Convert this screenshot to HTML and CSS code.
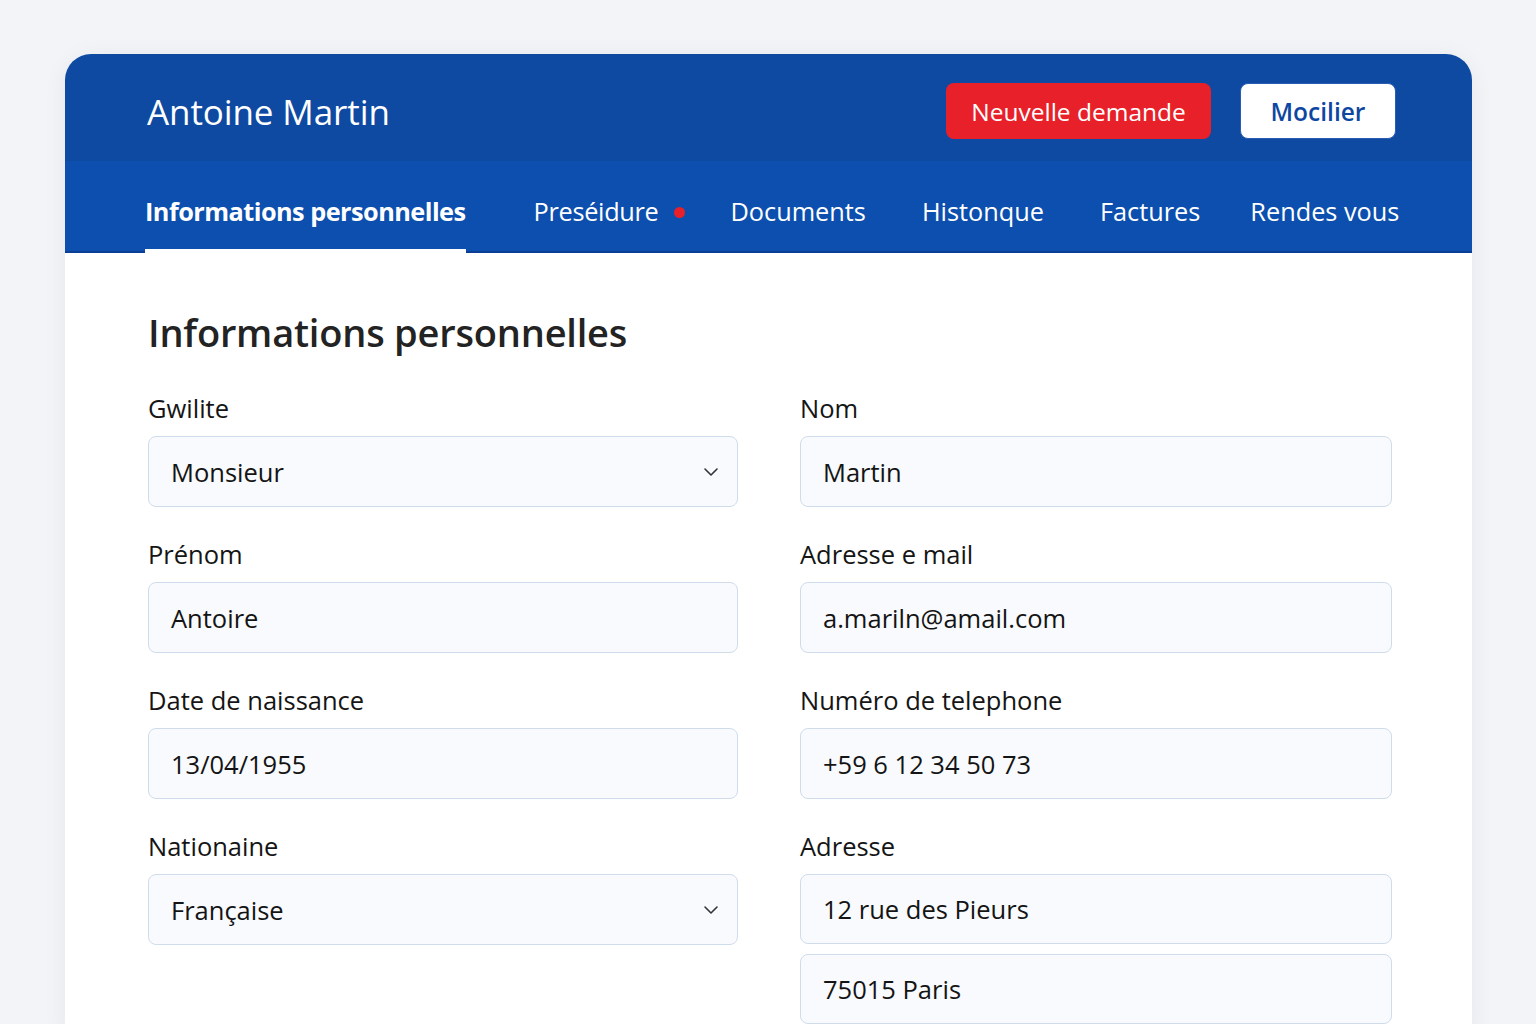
FILE: index.html
```html
<!DOCTYPE html>
<html lang="fr">
<head>
<meta charset="utf-8">
<title>Antoine Martin</title>
<link rel="stylesheet" href="styles.css">
</head>
<body>
<div class="page">
  <div class="card">
    <header class="topbar">
      <h1 class="name">Antoine Martin</h1>
      <div class="actions">
        <button class="btn btn-red">Neuvelle demande</button>
        <button class="btn btn-white">Mocilier</button>
      </div>
    </header>
    <nav class="tabs">
      <a class="tab active">Informations personnelles</a>
      <a class="tab tab-dot">Preséidure<span class="dot"></span></a>
      <a class="tab tab-docs">Documents</a>
      <a class="tab tab-hist">Histonque</a>
      <a class="tab tab-fact">Factures</a>
      <a class="tab">Rendes vous</a>
    </nav>
    <main class="body">
      <h2 class="title">Informations personnelles</h2>
      <div class="grid">
        <div class="field">
          <label class="label">Gwilite</label>
          <div class="input select">Monsieur
            <svg class="chev" width="16" height="10" viewBox="0 0 16 10"><path d="M2 2 L8 8 L14 2" fill="none" stroke="#333" stroke-width="1.6" stroke-linecap="round" stroke-linejoin="round"/></svg>
          </div>
        </div>
        <div class="field">
          <label class="label">Nom</label>
          <div class="input">Martin</div>
        </div>
        <div class="field">
          <label class="label">Prénom</label>
          <div class="input">Antoire</div>
        </div>
        <div class="field">
          <label class="label">Adresse e mail</label>
          <div class="input">a.mariln@amail.com</div>
        </div>
        <div class="field">
          <label class="label">Date de naissance</label>
          <div class="input">13/04/1955</div>
        </div>
        <div class="field">
          <label class="label">Numéro de telephone</label>
          <div class="input">+59 6 12 34 50 73</div>
        </div>
        <div class="field">
          <label class="label">Nationaine</label>
          <div class="input select">Française
            <svg class="chev" width="16" height="10" viewBox="0 0 16 10"><path d="M2 2 L8 8 L14 2" fill="none" stroke="#333" stroke-width="1.6" stroke-linecap="round" stroke-linejoin="round"/></svg>
          </div>
        </div>
        <div class="field">
          <label class="label">Adresse</label>
          <div class="stack">
            <div class="input">12 rue des Pieurs</div>
            <div class="input">75015 Paris</div>
          </div>
        </div>
      </div>
    </main>
  </div>
</div>
</body>
</html>
```
FILE: styles.css
```css
* { box-sizing: border-box; }
html, body { margin: 0; padding: 0; }
body {
  background: #f2f4f7;
  font-family: "Open Sans", "Noto Sans", sans-serif;
  color: #141414;
  height: 1024px;
  overflow: hidden;
}
.page {
  padding: 54px 64px 0 65px;
}
.card {
  background: #ffffff;
  border-radius: 26px 26px 0 0;
  box-shadow: 0 4px 24px rgba(20, 40, 80, 0.06);
  overflow: hidden;
  min-height: 980px;
}
.topbar {
  background: #0e4aa2;
  height: 107px;
  display: flex;
  align-items: center;
  justify-content: space-between;
  padding: 7px 76px 0 82px;
}
.name {
  margin: 0;
  color: #fff;
  font-size: 35px;
  font-weight: 500;
  letter-spacing: -0.1px;
}
.actions {
  display: flex;
  gap: 29px;
  align-items: center;
}
.btn {
  font-family: "Open Sans", "Noto Sans", sans-serif;
  font-size: 24.5px;
  height: 56px;
  border-radius: 8px;
  padding: 0 12px;
  cursor: pointer;
}
.btn-red {
  background: #e8202a;
  color: #fff;
  border: none;
  width: 265px;
}
.btn-white {
  background: #fff;
  color: #0e47a1;
  border: 1.5px solid #2a5cb3;
  width: 156px;
  font-weight: 600;
}
.tabs {
  background: #0c4fae;
  height: 92px;
  display: flex;
  align-items: stretch;
  padding: 10px 0 0 80px;
  border-bottom: 2px solid #0b3f96;
}
.tab {
  color: #fff;
  font-size: 25.3px;
  display: flex;
  align-items: center;
  margin-right: 56px;
  position: relative;
  white-space: nowrap;
}
.tab.active {
  font-weight: 700;
  margin-right: 68px;
  letter-spacing: -0.54px;
}
.tab.active::after {
  content: "";
  position: absolute;
  left: 0;
  right: 0;
  bottom: -2px;
  height: 4px;
  background: #fff;
}
.tab-dot { margin-right: 46px; letter-spacing: -0.3px; }
.tab-fact { margin-right: 50px; }
.dot {
  width: 11px;
  height: 11px;
  border-radius: 50%;
  background: #e8202a;
  margin-left: 15px;
  margin-top: 3px;
}
.body {
  padding: 55px 80px 0 83px;
}
.title {
  margin: 0 0 36px;
  font-size: 38px;
  line-height: 48px;
  font-weight: 600;
  color: #232323;
  letter-spacing: -0.2px;
}
.grid {
  display: grid;
  grid-template-columns: 590px 592px;
  column-gap: 62px;
  row-gap: 31px;
}
.field {
  display: flex;
  flex-direction: column;
}
.label {
  font-size: 25.5px;
  line-height: 32px;
  margin-bottom: 12px;
  color: #151515;
}
.input {
  height: 71px;
  background: #f8fafd;
  border: 1px solid #cfdcec;
  border-radius: 8px;
  padding: 0 22px;
  font-size: 25.5px;
  display: flex;
  align-items: center;
  justify-content: space-between;
  color: #141414;
}
.chev { margin-right: -4px; }
.stack {
  display: flex;
  flex-direction: column;
  gap: 10px;
}
.stack .input { height: 70px; }
```
